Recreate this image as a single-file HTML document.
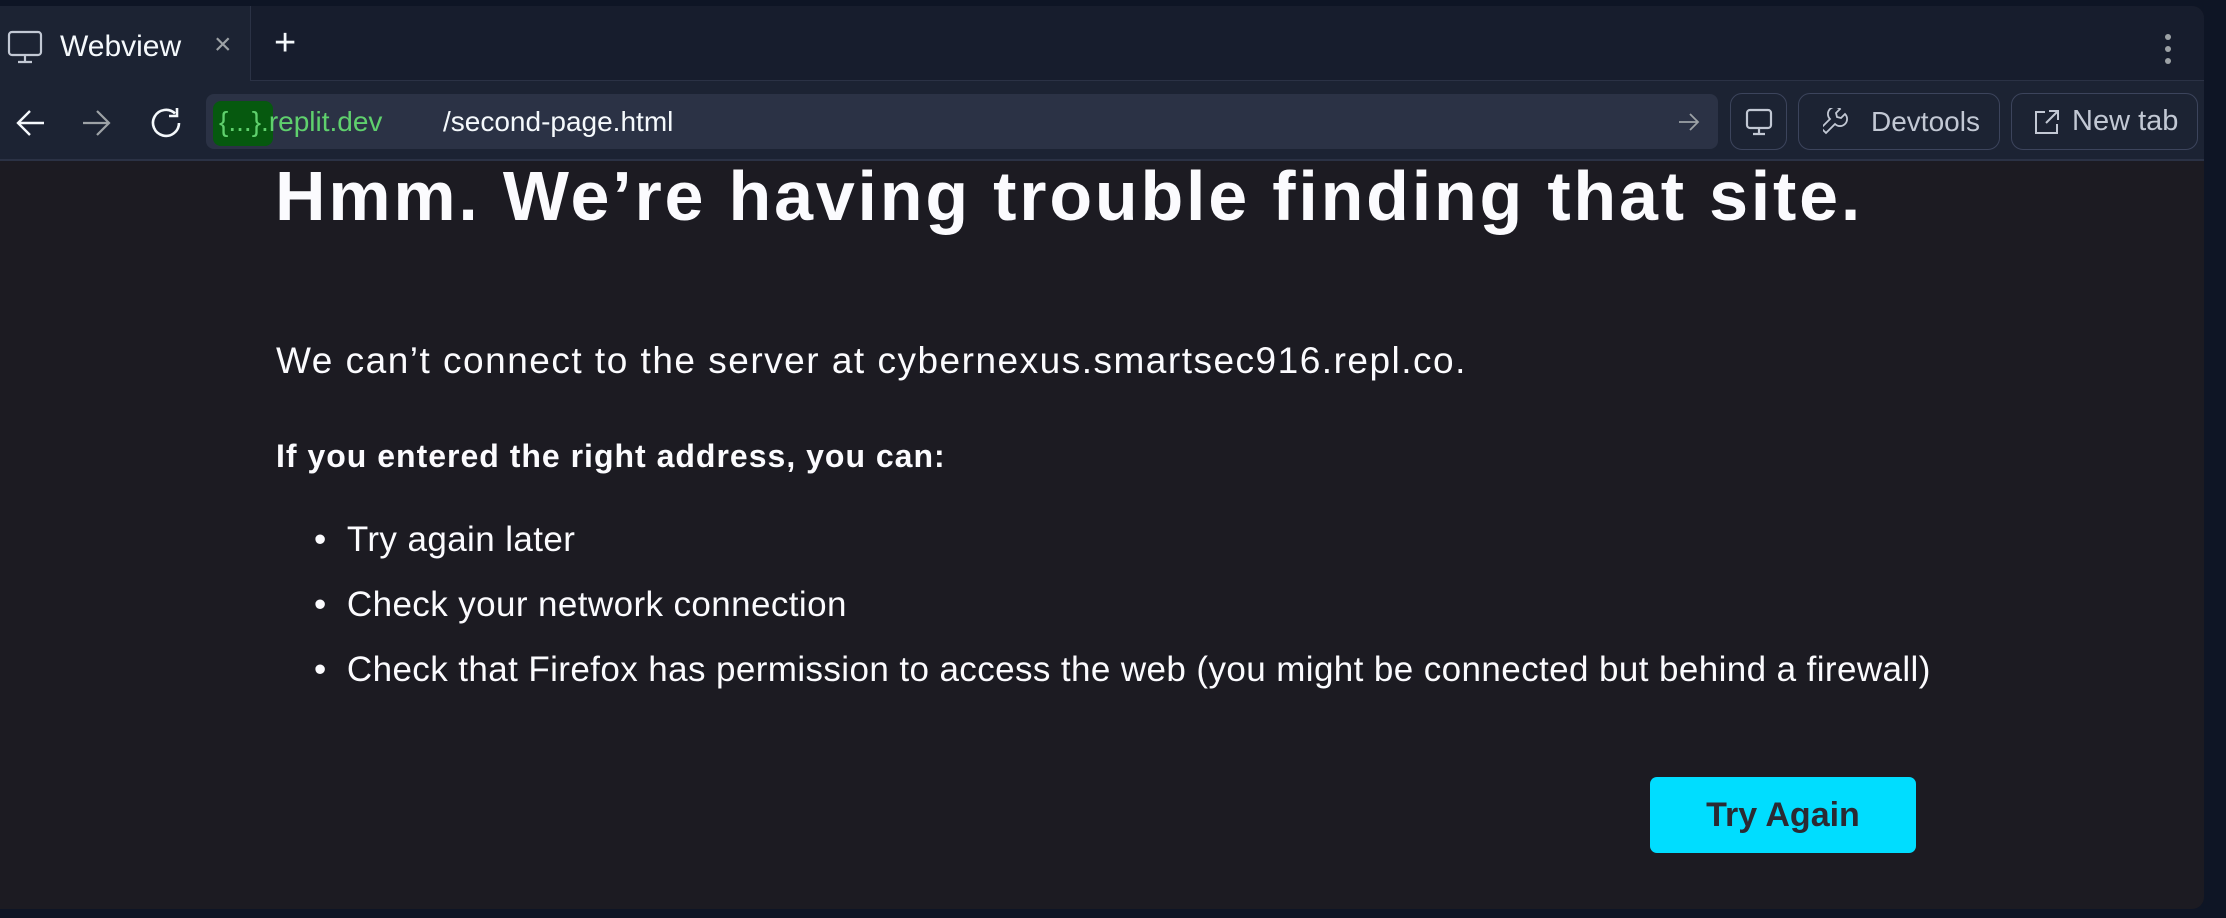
<!DOCTYPE html>
<html><head><meta charset="utf-8"><style>
*{margin:0;padding:0;box-sizing:border-box}
body{width:2226px;height:918px;background:#0e1525;font-family:"Liberation Sans",sans-serif;position:relative;overflow:hidden}
.panel{position:absolute;left:0;top:6px;width:2204px;height:903px;background:#1c1b22;border-radius:0 12px 12px 0;overflow:hidden}
.tabbar{position:absolute;left:0;top:0;width:100%;height:75px;background:#171d2d;border-bottom:1px solid #2b3245}
.tab{position:absolute;left:0;top:0;width:251px;height:76px;background:#1c2333;border-right:1px solid #2b3245}
.addr{position:absolute;left:0;top:75px;width:100%;height:80px;background:#1c2333;border-bottom:2px solid #2b3245}
.url{position:absolute;left:206px;top:13px;width:1512px;height:55px;background:#2b3245;border-radius:8px}
.btn{position:absolute;top:12px;height:57px;border:1.5px solid #3c445c;border-radius:12px;color:#c2c8d4;font-size:28px;display:flex;align-items:center}
.t{position:absolute;color:#fbfbfe;white-space:nowrap}
</style></head><body>
<div class="panel">
 <div class="tabbar">
  <div class="tab">
   <svg style="position:absolute;left:7px;top:24px" width="36" height="34" viewBox="0 0 36 34" fill="none" stroke="#c2c8d4" stroke-width="2.2"><rect x="2" y="2" width="32" height="23" rx="3"/><path d="M18 25v6M11 32h14"/></svg>
   <div class="t" style="left:60px;top:24px;font-size:30px;color:#f5f9fc">Webview</div>
   <div class="t" style="left:214px;top:22px;font-size:30px;color:#9da2a6">×</div>
  </div>
  <div class="t" style="left:274px;top:16px;font-size:38px;color:#f5f9fc">+</div>
  <svg style="position:absolute;left:2162px;top:26px" width="12" height="34"><circle cx="6" cy="5" r="3" fill="#9da2a6"/><circle cx="6" cy="17" r="3" fill="#9da2a6"/><circle cx="6" cy="29" r="3" fill="#9da2a6"/></svg>
 </div>
 <div class="addr">
  <svg style="position:absolute;left:16px;top:27px" width="30" height="30" fill="none" stroke="#f5f9fc" stroke-width="2.4"><path d="M28 15H3M14 3L2 15l12 12"/></svg>
  <svg style="position:absolute;left:81px;top:27px" width="30" height="30" fill="none" stroke="#9da2a6" stroke-width="2.2"><path d="M2 15h25M16 3l12 12-12 12"/></svg>
  <svg style="position:absolute;left:148px;top:24px" width="36" height="36" fill="none" stroke="#f5f9fc" stroke-width="2.6"><path d="M31 18a13 13 0 1 1-4-9.5"/><path d="M29 3v8h-8"/></svg>
  <div class="url">
   <div style="position:absolute;left:7px;top:7px;width:60px;height:45px;background:#06590f;border-radius:8px"></div>
   <div class="t" style="left:13px;top:12px;font-size:28px;color:#5fd06d">{...}.replit.dev</div>
   <div class="t" style="left:237px;top:12px;font-size:28px;color:#f5f9fc">/second-page.html</div>
   <svg style="position:absolute;left:1472px;top:17px" width="22" height="22" fill="none" stroke="#9da2a6" stroke-width="1.8"><path d="M1 11h19M12 3l8 8-8 8"/></svg>
  </div>
  <div class="btn" style="left:1730px;width:57px;justify-content:center"><svg width="30" height="30" fill="none" stroke="#c2c8d4" stroke-width="2.2"><rect x="3" y="3" width="24" height="18" rx="3"/><path d="M15 21v6M9 27h12"/></svg></div>
  <div class="btn" style="left:1798px;width:202px"><svg style="margin-left:24px" width="28" height="28" fill="none" stroke="#c2c8d4" stroke-width="1.8"><path d="M3 25l9-9a7 7 0 0 0 10-10l-4 4-4-1-1-4 4-4a7 7 0 0 0-10 10l-9 9z"/></svg><span style="margin-left:20px">Devtools</span></div>
  <div class="btn" style="left:2011px;width:187px"><svg style="margin-left:22px" width="26" height="26" fill="none" stroke="#c2c8d4" stroke-width="2"><path d="M11 3H2v21h21v-9M15 2h9v9M24 2L12 14"/></svg><span style="margin-left:12px;font-size:29px">New tab</span></div>
 </div>
 <div class="t" style="left:275px;top:150px;font-size:70px;font-weight:bold;letter-spacing:2.8px">Hmm. We’re having trouble finding that site.</div>
 <div class="t" style="left:276px;top:334px;font-size:37px;letter-spacing:1.5px">We can’t connect to the server at cybernexus.smartsec916.repl.co.</div>
 <div class="t" style="left:276px;top:432px;font-size:32px;font-weight:bold;letter-spacing:1px">If you entered the right address, you can:</div>
 <div class="t" style="left:314px;top:514px;font-size:35px;letter-spacing:0.4px">•&nbsp;&nbsp;Try again later</div>
 <div class="t" style="left:314px;top:579px;font-size:35px;letter-spacing:0.4px">•&nbsp;&nbsp;Check your network connection</div>
 <div class="t" style="left:314px;top:644px;font-size:35px;letter-spacing:0.4px">•&nbsp;&nbsp;Check that Firefox has permission to access the web (you might be connected but behind a firewall)</div>
 <div style="position:absolute;left:1650px;top:771px;width:266px;height:76px;background:#00ddff;border-radius:7px;color:#2b2a33;font-size:34px;font-weight:bold;display:flex;align-items:center;justify-content:center">Try Again</div>
</div>
</body></html>
